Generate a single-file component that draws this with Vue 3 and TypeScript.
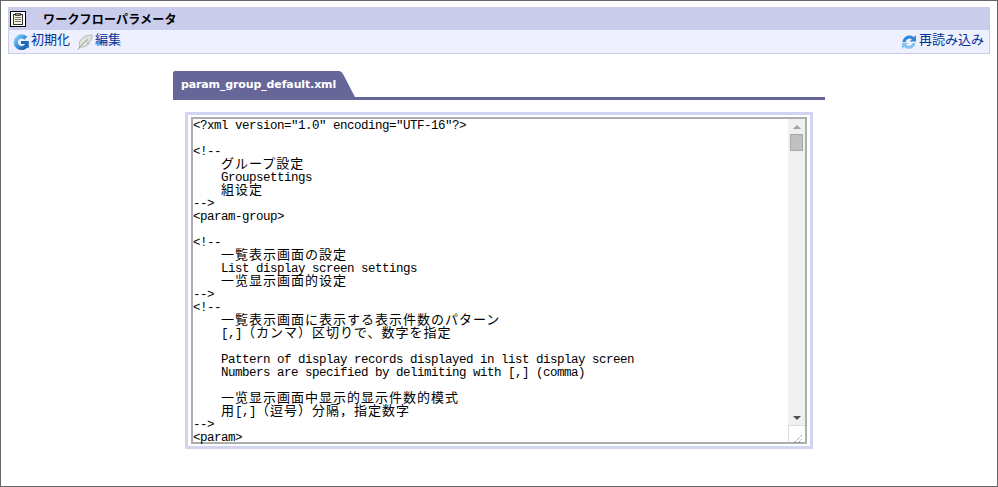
<script setup lang="ts">
const raw: string[] = [
  '<?xml version="1.0" encoding="UTF-16"?>',
  '',
  '<!--',
  '    グループ設定',
  '    Groupsettings',
  '    組设定',
  '-->',
  '<param-group>',
  '',
  '<!--',
  '    一覧表示画面の設定',
  '    List display screen settings',
  '    一览显示画面的设定',
  '-->',
  '<!--',
  '    一覧表示画面に表示する表示件数のパターン',
  '    [,]（カンマ）区切りで、数字を指定',
  '',
  '    Pattern of display records displayed in list display screen',
  '    Numbers are specified by delimiting with [,] (comma)',
  '',
  '    一览显示画面中显示的显示件数的模式',
  '    用[,]（逗号）分隔，指定数字',
  '-->',
  '<param>'
]

interface Seg { t: string; cjk: boolean }

function split(line: string): Seg[] {
  const parts = line.match(/[\u0000-\u00ff]+|[^\u0000-\u00ff]+/g) ?? []
  return parts.map((t) => ({ t, cjk: t.charCodeAt(0) > 255 }))
}

const lines = raw.map(split)
</script>

<template>
  <div class="page">
    <header class="head">
      <div class="title">
        <span class="title-icon">
          <svg width="16" height="16" viewBox="0 0 16 16">
            <rect x="0.5" y="0.5" width="15" height="15" fill="#fff" stroke="#000" />
            <rect x="3.500" y="3.500" width="9" height="10" fill="#f6f2dc" stroke="#333" />
            <rect x="5.500" y="2.500" width="5" height="2" fill="#8a8a70" stroke="#222" stroke-width="0.7" />
            <path d="M5 6.500h6M5 8.500h6M5 10.500h6" stroke="#777" />
          </svg>
        </span>
        <span class="title-text">ワークフローパラメータ</span>
      </div>
      <div class="tools">
        <a class="tool">
          <svg class="ico" width="16" height="16" viewBox="0 0 16 16">
            <defs>
              <linearGradient id="gblue" x1="0" y1="0" x2="1" y2="1">
                <stop offset="0" stop-color="#86d0f5" />
                <stop offset="0.5" stop-color="#3a8fdc" />
                <stop offset="1" stop-color="#1a5cae" />
              </linearGradient>
            </defs>
            <path d="M12.800 4.300A5.800 5.800 0 1 0 13 12" stroke="url(#gblue)" stroke-width="4.200" fill="none" />
            <path d="M8 7H15.800V14.500L13.300 12.500L11.500 11.500L12 10H8Z" fill="#1f66ba" />
          </svg>
          <span class="lbl">初期化</span>
        </a>
        <a class="tool tool-edit">
          <svg class="ico" width="16" height="16" viewBox="0 0 16 16">
            <path d="M15.500 1C10 1 5 3 2.800 7.500C2 9.500 2.200 11.500 3 13C7 13.500 10.500 12 12.300 9L10 9.200L13.300 7.300C14.600 5.300 15.200 3.200 15.500 1Z" fill="#dde5dc" stroke="#a9b5aa" stroke-width="0.9" />
            <path d="M1 15.500C3.500 12 7 8 11 5.500" stroke="#8d988f" fill="none" />
          </svg>
          <span class="lbl">編集</span>
        </a>
        <a class="tool reload">
          <svg class="ico" width="16" height="16" viewBox="0 0 16 16">
            <path d="M1.500 8C2 4 5 1.500 8.500 1.500C10.300 1.500 11.700 2.200 12.800 3.200L15 1.300V7.500H8.800L10.900 5.500C10.300 4.900 9.400 4.600 8.500 4.600C6.500 4.600 5 5.900 4.700 8Z" fill="#2f86d8" />
            <path d="M14.500 9C14 12.500 11 14.800 7.800 14.800C6 14.800 4.400 14.100 3.300 13L1 15V8.800H7.300L5.300 10.800C6 11.400 6.900 11.800 7.800 11.800C9.700 11.800 11 10.600 11.400 9Z" fill="#86c3ee" />
          </svg>
          <span class="lbl">再読み込み</span>
        </a>
      </div>
    </header>

    <main class="body">
      <div class="tabs">
        <div class="tab">
          <span class="tab-label">param_group_default.xml</span>
          <svg class="tab-end" width="19" height="26" viewBox="0 0 19 26">
            <path d="M0 0H3Q5.500 0 7 3L19 26H0Z" fill="#666699" />
          </svg>
        </div>
      </div>
      <div class="frame">
        <div class="editor">
          <div class="code">
            <div class="code-inner">
              <div v-for="(line, i) in lines" :key="i" class="line">
                <span v-for="(seg, j) in line" :key="j" :class="seg.cjk ? 'cjk' : 'lat'">{{ seg.t }}</span>
              </div>
            </div>
          </div>
          <div class="bar">
            <div class="arrow"><i class="up"></i></div>
            <div class="track"><div class="thumb"></div></div>
            <div class="arrow"><i class="down"></i></div>
            <div class="corner">
              <svg width="16" height="16" viewBox="0 0 16 16">
                <path d="M5 14L13 6M9 14L13 10" stroke="#666" stroke-dasharray="1 1" fill="none" />
              </svg>
            </div>
          </div>
        </div>
      </div>
    </main>
  </div>
</template>

<style>
html, body { margin: 0; background: #fff; }
</style>

<style scoped>
.page {
  box-sizing: border-box;
  width: 998px;
  height: 487px;
  border: 1px solid #666;
  padding: 6px 7px 0;
  background: #fff;
  font-family: "Noto Sans CJK JP", "Liberation Sans", sans-serif;
  overflow: hidden;
}
.head {
  border: 1px solid #c9cceb;
  border-top: 0;
}
.title {
  display: flex;
  align-items: center;
  height: 23px;
  background: #c9cceb;
  margin: 0 -1px;
  padding-left: 2px;
}
.title-icon { display: flex; width: 16px; height: 16px; }
.title-text {
  margin-left: 17px;
  font-size: 12px;
  font-weight: 700;
  color: #000;
  letter-spacing: 0.2px;
}
.tools {
  display: flex;
  align-items: center;
  height: 23px;
  padding: 0 5px 0 4px;
  background: #eef0fd;
}
.tool {
  display: flex;
  align-items: center;
  gap: 2px;
  margin-right: 5px;
  font-size: 13px;
  color: #003399;
}
.tool-edit { margin-left: 2px; }
.lbl { padding-bottom: 6px; }
.ico { flex: none; }
.reload { margin-left: auto; margin-right: 0; }
.body {
  width: 652px;
  margin: 17px 0 0 165px;
}
.tabs {
  border-bottom: 3px solid #666699;
  height: 26px;
}
.tab { display: flex; height: 26px; }
.tab-label {
  display: flex;
  align-items: center;
  width: 153px;
  padding: 0 2px 0 8px;
  background: #666699;
  color: #fff;
  font-family: "DejaVu Sans", sans-serif;
  font-size: 11px;
  font-weight: 700;
  letter-spacing: -0.13px;
  border-radius: 2px 0 0 0;
  white-space: nowrap;
  padding-top: 1px;
  box-sizing: content-box;
  height: 25px;
}
.tab-end { display: block; }
.frame {
  box-sizing: border-box;
  width: 628px;
  height: 337px;
  margin: 12px 0 0 12px;
  border: 3px solid #d2d5f1;
  padding: 2px 3px 2px 3px;
}
.editor {
  box-sizing: border-box;
  display: flex;
  height: 100%;
  border: 2px solid #adadad;
  background: #fff;
}
.code {
  flex: 1;
  min-width: 0;
}
.code-inner { margin-top: -3px; }
.line {
  height: 13px;
  line-height: 13px;
  white-space: pre;
  color: #000;
}
.lat {
  font-family: "Liberation Mono", monospace;
  font-size: 12.5px;
  letter-spacing: -0.5px;
}
.cjk {
  font-family: "Noto Sans CJK JP", sans-serif;
  font-size: 13px;
  letter-spacing: 1px;
}
.bar {
  width: 17px;
  flex: none;
  display: flex;
  flex-direction: column;
  background: #f0f0f0;
}
.arrow {
  height: 15px;
  display: flex;
  align-items: center;
  justify-content: center;
}
.up, .down {
  width: 0;
  height: 0;
  border-left: 4px solid transparent;
  border-right: 4px solid transparent;
}
.up { border-bottom: 4px solid #a0a0a0; }
.down { border-top: 4px solid #505050; }
.track { flex: 1; }
.thumb {
  box-sizing: border-box;
  width: 13px;
  height: 17px;
  margin-left: 2px;
  background: #c0c0c0;
  border: 1px solid #a8a8a8;
}
.corner {
  box-sizing: border-box;
  height: 17px;
  background: #fff;
  border-left: 1px solid #ddd;
  border-top: 1px solid #ddd;
}
</style>
